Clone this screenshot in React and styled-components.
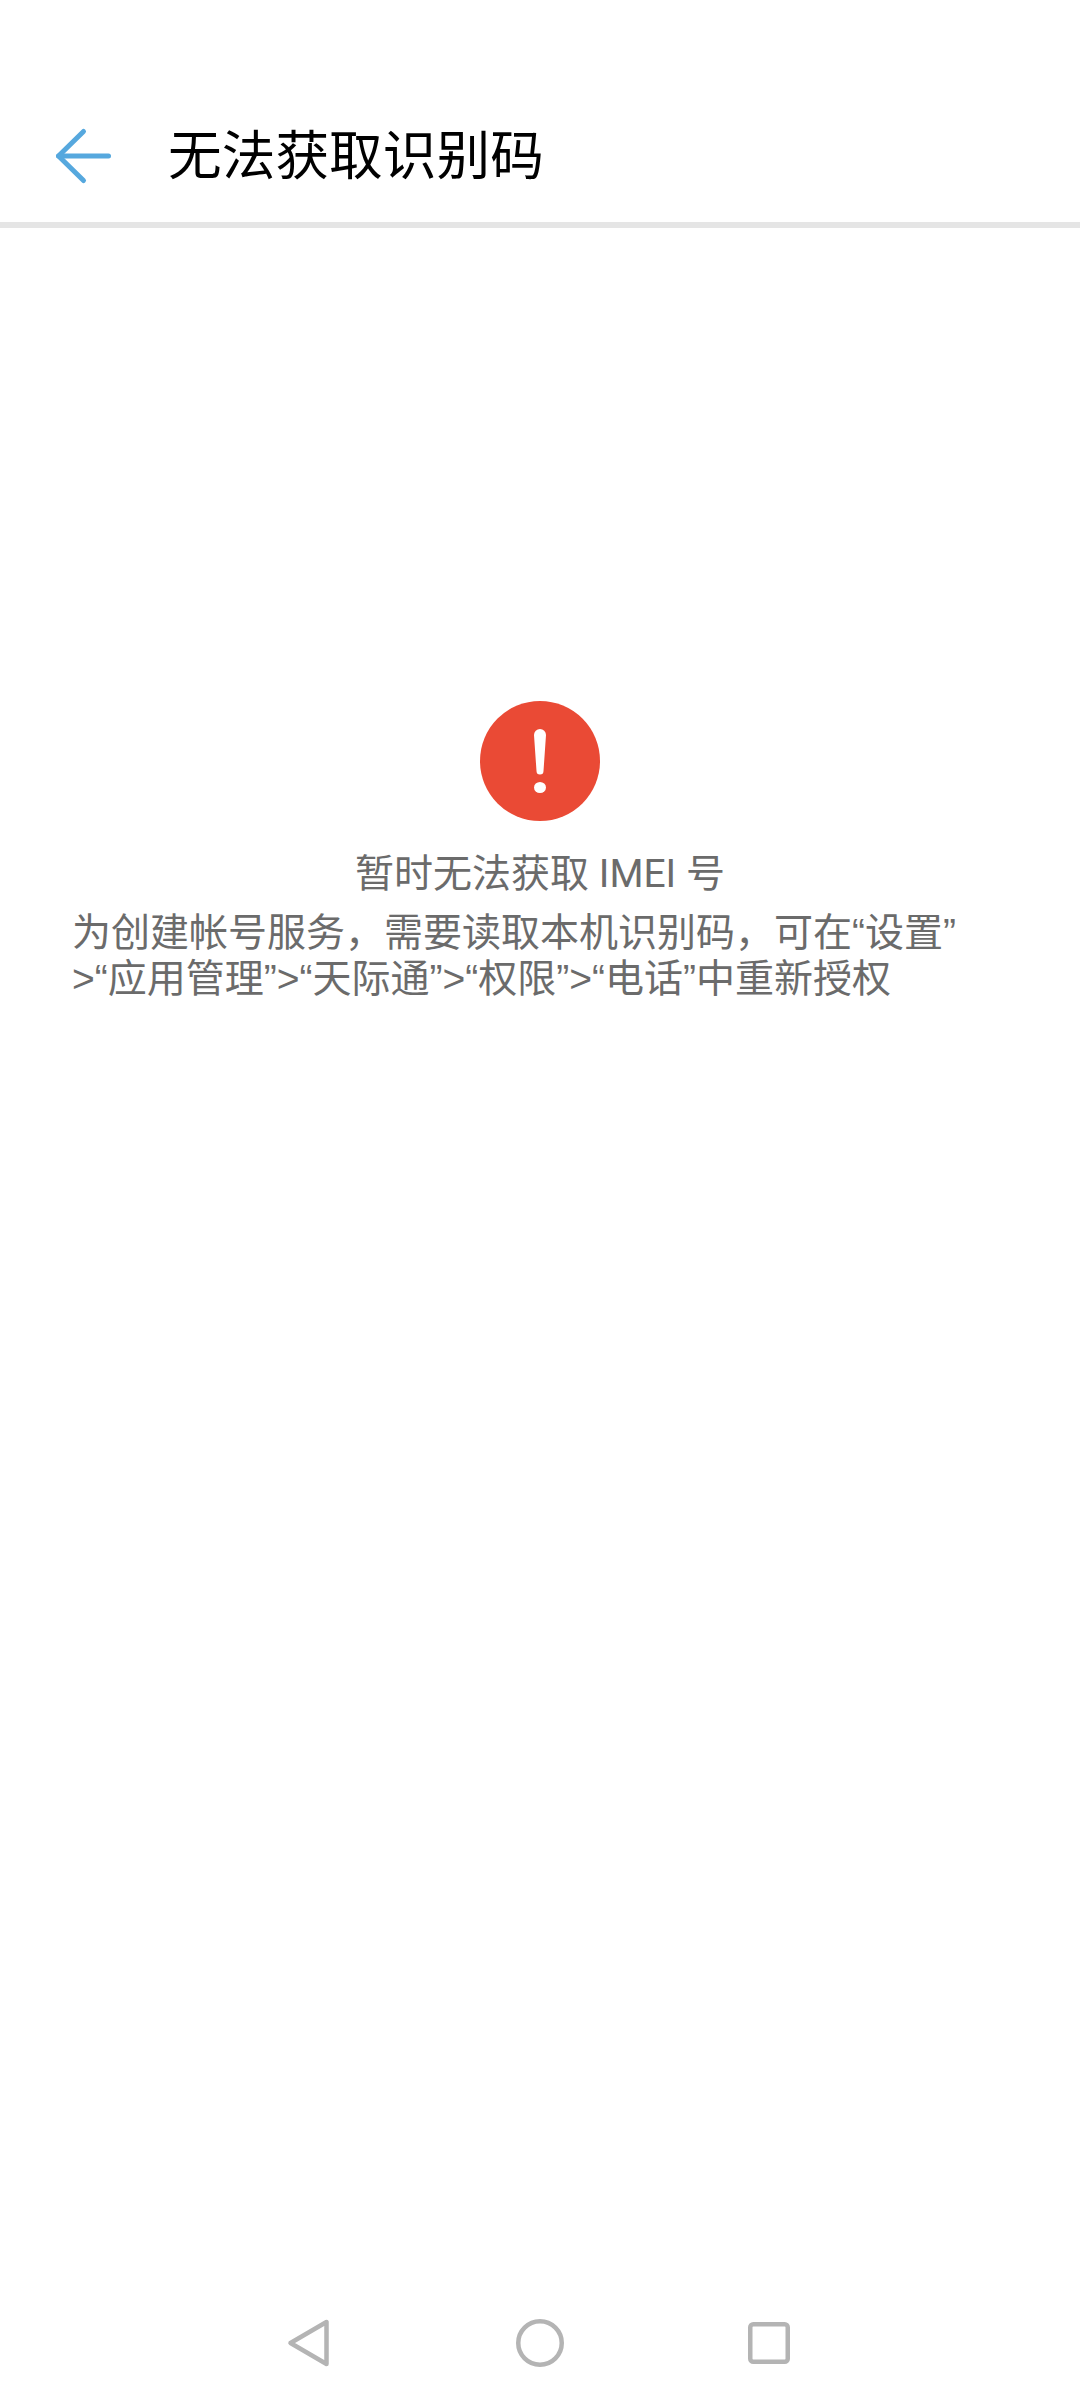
import React from "react";
import styled, { createGlobalStyle } from "styled-components";

const GlobalStyle = createGlobalStyle`
    html, body {
        margin: 0;
        padding: 0;
        background: #ffffff;
    }

    body {
        font-family: Roboto, "Noto Sans CJK SC", sans-serif;
    }
`;

function App() {
    return (
        <Page>
            <GlobalStyle />
            <Header>
                <BackButton aria-label="back">
                    <svg width="58" height="58" viewBox="0 0 58 58" fill="none" stroke="#56a8de" strokeWidth="5" strokeLinecap="round" strokeLinejoin="round">
                        <path d="M29.500 4.500 4.500 29 29.500 53.500" />
                        <path d="M4.500 29H54.500" />
                    </svg>
                </BackButton>
                <Title>无法获取识别码</Title>
            </Header>
            <Content>
                <AlertIcon>
                    <svg width="120" height="120" viewBox="0 0 120 120">
                        <circle cx="60" cy="60" r="60" fill="#ea4a35" />
                        <path d="M54 34a6 6 0 0 1 12 0L63.500 70a3.500 3.500 0 0 1-7 0Z" fill="#ffffff" />
                        <ellipse cx="60" cy="86.500" rx="6" ry="5.500" fill="#ffffff" />
                    </svg>
                </AlertIcon>
                <Heading>暂时无法获取 IMEI 号</Heading>
                <Message>
                    为创建帐号服务，需要读取本机识别码，可在“设置”
                    <br />
                    &gt;“应用管理”&gt;“天际通”&gt;“权限”&gt;“电话”中重新授权
                </Message>
            </Content>
            <NavBar>
                <svg width="48" height="52" viewBox="0 0 48 52" fill="none" stroke="#b4b4b4" strokeWidth="4.500" strokeLinejoin="round">
                    <path d="M6.500 26 42.500 5V47Z" />
                </svg>
                <svg width="48" height="52" viewBox="0 0 48 52" fill="none" stroke="#b4b4b4" strokeWidth="4.500">
                    <circle cx="24" cy="26" r="21.750" />
                </svg>
                <svg width="48" height="52" viewBox="0 0 48 52" fill="none" stroke="#b4b4b4" strokeWidth="4.500">
                    <rect x="2.250" y="7.250" width="37.500" height="37.500" rx="3" />
                </svg>
            </NavBar>
        </Page>
    );
}

export default App;

const Page = styled.div`
    display: flex;
    flex-direction: column;
    width: 1080px;
    height: 2400px;
    overflow: hidden;
    background: #ffffff;
`;

const Header = styled.header`
    display: flex;
    align-items: center;
    box-sizing: border-box;
    height: 228px;
    padding: 90px 0 0 54px;
    border-bottom: 6px solid #e5e5e5;
`;

const BackButton = styled.div`
    display: flex;
    width: 58px;
    height: 58px;
    margin-right: 56px;
`;

const Title = styled.h1`
    margin: 2px 0 0;
    font-size: 53.7px;
    font-weight: 400;
    line-height: 64px;
    color: #000000;
`;

const Content = styled.main`
    flex: 1;
    display: flex;
    flex-direction: column;
    align-items: center;
    padding: 473px 72px 0;
`;

const AlertIcon = styled.div`
    display: flex;
    width: 120px;
    height: 120px;
    margin-bottom: 26px;
`;

const Heading = styled.h2`
    margin: 0 0 9px;
    font-size: 39px;
    font-weight: 400;
    line-height: 54px;
    color: #6b6b6b;
    text-align: center;
`;

const Message = styled.p`
    align-self: stretch;
    margin: 0;
    font-family: "Liberation Sans", "Noto Sans CJK SC", sans-serif;
    font-size: 39px;
    font-weight: 400;
    line-height: 46px;
    color: #6b6b6b;
    white-space: nowrap;
`;

const NavBar = styled.nav`
    display: flex;
    justify-content: center;
    align-items: center;
    gap: 184px;
    height: 114px;
`;
